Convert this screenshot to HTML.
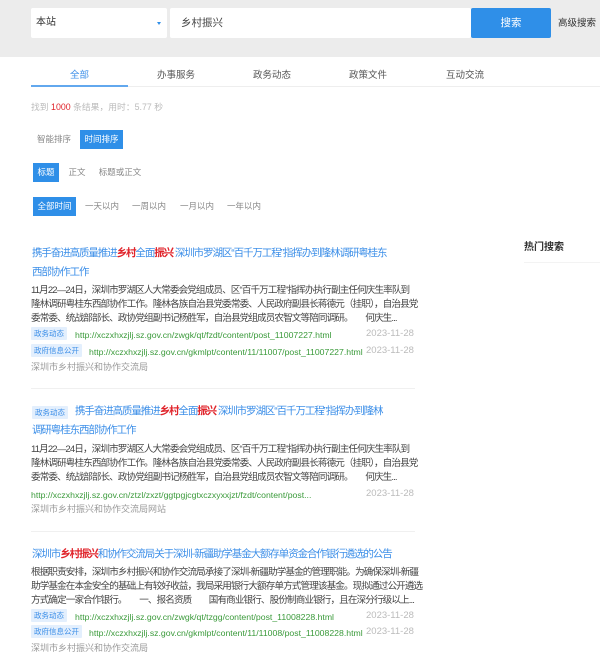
<!DOCTYPE html>
<html><head><meta charset="utf-8"><style>
*{margin:0;padding:0;box-sizing:border-box}
body{width:600px;height:662px;overflow:hidden;background:#fff;font-family:"Liberation Sans","Noto Sans CJK SC",sans-serif;position:relative;color:#333}
.a{position:absolute;white-space:nowrap}
.hdr{position:absolute;left:0;top:0;width:600px;height:57px;background:#ececec}
.t{font-size:10.5px;color:#3d8fe8;line-height:19px;letter-spacing:-1.1px}
.r{color:#e0242b;font-weight:bold}
.b{font-size:9.6px;color:#444;line-height:14px;letter-spacing:-0.9px}
.tag{position:absolute;font-size:7.5px;color:#3d8fe8;background:#e3effd;padding:0 3px;line-height:13px;height:13px;border-radius:1px}
.u{font-size:8.7px;color:#3a9a3a;line-height:10px}
.d{font-size:9.5px;color:#bbb;line-height:10px}
.s{font-size:9px;color:#999;line-height:10px}
.btn{position:absolute;font-size:8.5px;line-height:19px;color:#888;text-align:center}
.on{background:#2f8fe8;color:#fff}
.sep{position:absolute;left:31px;width:384px;height:1px;background:#f0f0f0}
.tab{position:absolute;top:70px;font-size:9.5px;color:#555;line-height:11px}
</style></head><body>
<div class="hdr"></div>
<div class="a" style="left:31px;top:8px;width:136px;height:30px;background:#fff;border-radius:2px"></div>
<div class="a" style="left:36px;top:17px;font-size:10px;color:#333;line-height:11px">本站</div>
<div class="a" style="left:157px;top:22px;width:0;height:0;border-left:2.5px solid transparent;border-right:2.5px solid transparent;border-top:3px solid #2f8fe8"></div>
<div class="a" style="left:170px;top:8px;width:301px;height:30px;background:#fff;border-radius:2px"></div>
<div class="a" style="left:181px;top:17px;font-size:10.5px;color:#444;line-height:12px">乡村振兴</div>
<div class="a" style="left:471px;top:8px;width:80px;height:30px;background:#2f8fe8;border-radius:2px;color:#fff;font-size:10.5px;text-align:center;line-height:30px">搜索</div>
<div class="a" style="left:558px;top:18px;font-size:9.5px;color:#333;line-height:11px">高级搜索</div>

<div class="tab" style="left:70px;color:#3d8fe8">全部</div>
<div class="tab" style="left:157px">办事服务</div>
<div class="tab" style="left:253px">政务动态</div>
<div class="tab" style="left:349px">政策文件</div>
<div class="tab" style="left:446px">互动交流</div>
<div class="a" style="left:31px;top:86px;width:569px;height:1px;background:#eee"></div>
<div class="a" style="left:31px;top:85px;width:97px;height:2px;background:#62a8ee"></div>

<div class="a" style="left:31px;top:102px;font-size:8.8px;color:#bbb;line-height:11px">找到 <span style="color:#e0242b">1000</span> 条结果，用时：5.77 秒</div>
<div class="btn" style="left:35px;top:130px;width:38px">智能排序</div>
<div class="btn on" style="left:80px;top:130px;width:43px">时间排序</div>
<div class="btn on" style="left:33px;top:163px;width:26px">标题</div>
<div class="btn" style="left:66px;top:163px;width:22px">正文</div>
<div class="btn" style="left:97px;top:163px;width:46px">标题或正文</div>
<div class="btn on" style="left:33px;top:197px;width:43px">全部时间</div>
<div class="btn" style="left:83px;top:197px;width:38px">一天以内</div>
<div class="btn" style="left:130px;top:197px;width:38px">一周以内</div>
<div class="btn" style="left:178px;top:197px;width:38px">一月以内</div>
<div class="btn" style="left:225px;top:197px;width:38px">一年以内</div>

<div class="a" style="left:524px;top:242px;font-size:10px;font-weight:bold;color:#333;line-height:12px">热门搜索</div>
<div class="a" style="left:524px;top:262px;width:76px;height:1px;background:#f3f3f3"></div>

<!-- result 1 -->
<div class="a t" style="left:32px;top:244px">携手奋进高质量推进<span class="r">乡村</span>全面<span class="r">振兴</span> 深圳市罗湖区“百千万工程”指挥办到隆林调研粤桂东<br>西部协作工作</div>
<div class="a b" style="left:31px;top:284px">11月22—24日，深圳市罗湖区人大常委会党组成员、区“百千万工程”指挥办执行副主任何庆生率队到<br>隆林调研粤桂东西部协作工作。隆林各族自治县党委常委、人民政府副县长蒋德元（挂职），自治县党<br>委常委、统战部部长、政协党组副书记杨胜军，自治县党组成员农智文等陪同调研。　　何庆生...</div>
<div class="tag" style="left:31px;top:327px">政务动态</div>
<div class="a u" style="left:75px;top:330px">http://xczxhxzjlj.sz.gov.cn/zwgk/qt/fzdt/content/post_11007227.html</div>
<div class="a d" style="left:366px;top:329px">2023-11-28</div>
<div class="tag" style="left:31px;top:344px">政府信息公开</div>
<div class="a u" style="left:89px;top:347px">http://xczxhxzjlj.sz.gov.cn/gkmlpt/content/11/11007/post_11007227.html</div>
<div class="a d" style="left:366px;top:346px">2023-11-28</div>
<div class="a s" style="left:31px;top:362px">深圳市乡村振兴和协作交流局</div>
<div class="sep" style="top:388px"></div>

<!-- result 2 -->
<div class="tag" style="left:32px;top:406px">政务动态</div>
<div class="a t" style="left:32px;top:402px"><span style="display:inline-block;width:43px"></span>携手奋进高质量推进<span class="r">乡村</span>全面<span class="r">振兴</span> 深圳市罗湖区“百千万工程”指挥办到隆林<br>调研粤桂东西部协作工作</div>
<div class="a b" style="left:31px;top:443px">11月22—24日，深圳市罗湖区人大常委会党组成员、区“百千万工程”指挥办执行副主任何庆生率队到<br>隆林调研粤桂东西部协作工作。隆林各族自治县党委常委、人民政府副县长蒋德元（挂职），自治县党<br>委常委、统战部部长、政协党组副书记杨胜军，自治县党组成员农智文等陪同调研。　　何庆生...</div>
<div class="a u" style="left:31px;top:490px">http://xczxhxzjlj.sz.gov.cn/ztzl/zxzt/ggtpgjcgtxczxyxxjzt/fzdt/content/post...</div>
<div class="a d" style="left:366px;top:489px">2023-11-28</div>
<div class="a s" style="left:31px;top:504px">深圳市乡村振兴和协作交流局网站</div>
<div class="sep" style="top:531px"></div>

<!-- result 3 -->
<div class="a t" style="left:32px;top:545px">深圳市<span class="r">乡村振兴</span>和协作交流局关于深圳-新疆助学基金大额存单资金合作银行遴选的公告</div>
<div class="a b" style="left:31px;top:566px">根据职责安排，深圳市乡村振兴和协作交流局承接了深圳-新疆助学基金的管理职能。为确保深圳-新疆<br>助学基金在本金安全的基础上有较好收益，我局采用银行大额存单方式管理该基金。现拟通过公开遴选<br>方式确定一家合作银行。　　一、报名资质　　国有商业银行、股份制商业银行，且在深分行级以上...</div>
<div class="tag" style="left:31px;top:609px">政务动态</div>
<div class="a u" style="left:75px;top:612px">http://xczxhxzjlj.sz.gov.cn/zwgk/qt/tzgg/content/post_11008228.html</div>
<div class="a d" style="left:366px;top:611px">2023-11-28</div>
<div class="tag" style="left:31px;top:625px">政府信息公开</div>
<div class="a u" style="left:89px;top:628px">http://xczxhxzjlj.sz.gov.cn/gkmlpt/content/11/11008/post_11008228.html</div>
<div class="a d" style="left:366px;top:627px">2023-11-28</div>
<div class="a s" style="left:31px;top:643px">深圳市乡村振兴和协作交流局</div>
</body></html>
